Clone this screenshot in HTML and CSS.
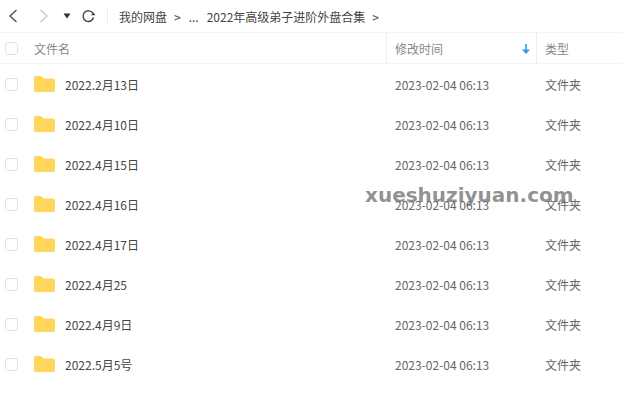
FILE: index.html
```html
<!DOCTYPE html>
<html lang="zh-CN">
<head>
    <meta charset="UTF-8">
    <title>2022年高级弟子进阶外盘合集</title>
    <link rel="stylesheet" href="styles.css">
</head>
<body>

<!-- Toolbar -->
<div class="toolbar">
    <svg class="nav-icon back" width="12" height="16" viewBox="0 0 12 16"><path d="M9.5 2 3 8l6.500 6" fill="none" stroke="#555" stroke-width="1.500"/></svg>
    <svg class="nav-icon forward" width="12" height="16" viewBox="0 0 12 16"><path d="M2.500 2 9 8l-6.500 6" fill="none" stroke="#ccc" stroke-width="1.500"/></svg>
    <svg class="nav-icon caret" width="8" height="6" viewBox="0 0 8 6"><path d="M0.500 0.500h7L4 5.500z" fill="#333"/></svg>
    <svg class="nav-icon refresh" width="15" height="15" viewBox="0 0 15 15"><path d="M11.800 4.200A5.300 5.300 0 1 0 12.500 8.500" fill="none" stroke="#444" stroke-width="1.400"/><path d="M10 6.200h4.500L12.300 3.200z" fill="#444"/></svg>
    <span class="divider"></span>
    <div class="crumbs">
        <span>我的网盘</span>
        <span class="sep">&gt;</span>
        <span class="dots">...</span>
        <span>2022年高级弟子进阶外盘合集</span>
        <span class="sep">&gt;</span>
    </div>
</div>

<!-- File list -->
<div class="list-head">
    <span class="checkbox"></span>
    <span class="name-col">文件名</span>
    <span class="time-col">修改时间
        <svg class="sort" width="8" height="10" viewBox="0 0 8 10"><path d="M3.200 0h1.600v5.500H8L4 10 0 5.500h3.200z" fill="#2d9fe0"/></svg>
    </span>
    <span class="type-col">类型</span>
</div>

<div class="row">
    <span class="checkbox"></span>
    <div class="name-col"><svg class="folder" width="21" height="16" viewBox="0 0 21 16"><path d="M0 2a2 2 0 0 1 2-2h5l2.500 2.500H19a2 2 0 0 1 2 2V14a2 2 0 0 1-2 2H2a2 2 0 0 1-2-2z" fill="#ffd659"/></svg><span>2022.2月13日</span></div>
    <span class="time-col">2023-02-04 06:13</span>
    <span class="type-col">文件夹</span>
</div>
<div class="row">
    <span class="checkbox"></span>
    <div class="name-col"><svg class="folder" width="21" height="16" viewBox="0 0 21 16"><path d="M0 2a2 2 0 0 1 2-2h5l2.500 2.500H19a2 2 0 0 1 2 2V14a2 2 0 0 1-2 2H2a2 2 0 0 1-2-2z" fill="#ffd659"/></svg><span>2022.4月10日</span></div>
    <span class="time-col">2023-02-04 06:13</span>
    <span class="type-col">文件夹</span>
</div>
<div class="row">
    <span class="checkbox"></span>
    <div class="name-col"><svg class="folder" width="21" height="16" viewBox="0 0 21 16"><path d="M0 2a2 2 0 0 1 2-2h5l2.500 2.500H19a2 2 0 0 1 2 2V14a2 2 0 0 1-2 2H2a2 2 0 0 1-2-2z" fill="#ffd659"/></svg><span>2022.4月15日</span></div>
    <span class="time-col">2023-02-04 06:13</span>
    <span class="type-col">文件夹</span>
</div>
<div class="row">
    <span class="checkbox"></span>
    <div class="name-col"><svg class="folder" width="21" height="16" viewBox="0 0 21 16"><path d="M0 2a2 2 0 0 1 2-2h5l2.500 2.500H19a2 2 0 0 1 2 2V14a2 2 0 0 1-2 2H2a2 2 0 0 1-2-2z" fill="#ffd659"/></svg><span>2022.4月16日</span></div>
    <span class="time-col">2023-02-04 06:13</span>
    <span class="type-col">文件夹</span>
</div>
<div class="row">
    <span class="checkbox"></span>
    <div class="name-col"><svg class="folder" width="21" height="16" viewBox="0 0 21 16"><path d="M0 2a2 2 0 0 1 2-2h5l2.500 2.500H19a2 2 0 0 1 2 2V14a2 2 0 0 1-2 2H2a2 2 0 0 1-2-2z" fill="#ffd659"/></svg><span>2022.4月17日</span></div>
    <span class="time-col">2023-02-04 06:13</span>
    <span class="type-col">文件夹</span>
</div>
<div class="row">
    <span class="checkbox"></span>
    <div class="name-col"><svg class="folder" width="21" height="16" viewBox="0 0 21 16"><path d="M0 2a2 2 0 0 1 2-2h5l2.500 2.500H19a2 2 0 0 1 2 2V14a2 2 0 0 1-2 2H2a2 2 0 0 1-2-2z" fill="#ffd659"/></svg><span>2022.4月25</span></div>
    <span class="time-col">2023-02-04 06:13</span>
    <span class="type-col">文件夹</span>
</div>
<div class="row">
    <span class="checkbox"></span>
    <div class="name-col"><svg class="folder" width="21" height="16" viewBox="0 0 21 16"><path d="M0 2a2 2 0 0 1 2-2h5l2.500 2.500H19a2 2 0 0 1 2 2V14a2 2 0 0 1-2 2H2a2 2 0 0 1-2-2z" fill="#ffd659"/></svg><span>2022.4月9日</span></div>
    <span class="time-col">2023-02-04 06:13</span>
    <span class="type-col">文件夹</span>
</div>
<div class="row">
    <span class="checkbox"></span>
    <div class="name-col"><svg class="folder" width="21" height="16" viewBox="0 0 21 16"><path d="M0 2a2 2 0 0 1 2-2h5l2.500 2.500H19a2 2 0 0 1 2 2V14a2 2 0 0 1-2 2H2a2 2 0 0 1-2-2z" fill="#ffd659"/></svg><span>2022.5月5号</span></div>
    <span class="time-col">2023-02-04 06:13</span>
    <span class="type-col">文件夹</span>
</div>

<!-- Watermark over the list -->
<div class="watermark">xueshuziyuan.com</div>

</body>
</html>
```

FILE: styles.css
```css
/* General Body Styling */
body {
    margin: 0;
    background: #fff;
    color: #444;
    font-family: "Noto Sans CJK SC", "Noto Sans", sans-serif;
    font-size: 12px;
    position: relative;
    height: 410px;
    overflow: hidden;
}

/* Toolbar */
.toolbar {
    height: 32px;
    display: flex;
    align-items: center;
    padding-left: 7px;
    border-bottom: 1px solid #f5f5f5;
}

.nav-icon {
    flex: none;
}

.forward {
    margin-left: 19px;
}

.caret {
    margin-left: 13px;
}

.refresh {
    margin-left: 10px;
}

.divider {
    width: 1px;
    height: 16px;
    background: #ececec;
    margin-left: 11px;
}

.crumbs {
    display: flex;
    align-items: center;
    margin-left: 11px;
    color: #444;
}

.crumbs .sep {
    margin-left: 7px;
    margin-right: 8px;
}

.crumbs .dots {
    margin-right: 8px;
}

/* Columns */
.list-head,
.row {
    display: grid;
    grid-template-columns: 29px 352px 150px 1fr;
    align-items: center;
    padding-left: 5px;
}

.list-head {
    height: 30px;
    border-bottom: 1px solid #f5f5f5;
    color: #888;
}

.list-head .name-col {
    padding-left: 0;
}

.list-head .time-col,
.list-head .type-col {
    height: 100%;
    display: flex;
    align-items: center;
    border-left: 1px solid #f0f0f0;
    padding-left: 8px;
}

.list-head .time-col {
    position: relative;
}

.sort {
    position: absolute;
    right: 6px;
    top: 11px;
}

/* Rows */
.row {
    height: 40px;
}

.row .name-col {
    display: flex;
    align-items: center;
    color: #444;
}

.row .time-col,
.row .type-col {
    padding-left: 9px;
    color: #666;
}

.folder {
    margin-right: 10px;
    flex: none;
}

.checkbox {
    width: 11px;
    height: 11px;
    border: 1px solid #e2e2e2;
    border-radius: 3px;
}

/* Watermark */
.watermark {
    position: absolute;
    left: 365px;
    top: 183px;
    font-family: "DejaVu Sans", sans-serif;
    font-size: 20px;
    font-weight: bold;
    color: rgba(110, 110, 110, 0.75);
    white-space: nowrap;
}
```
